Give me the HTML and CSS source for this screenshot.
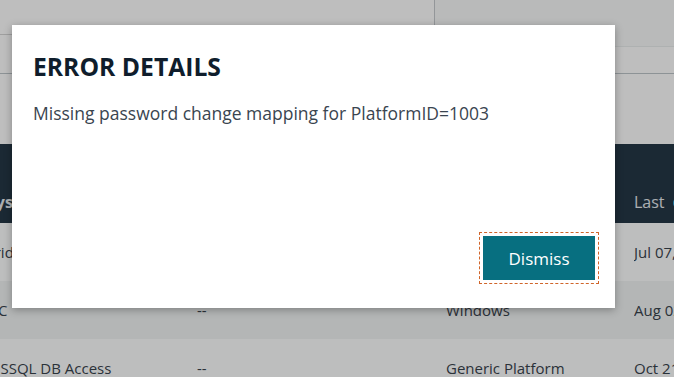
FILE: index.html
```html
<!DOCTYPE html>
<html>
<head>
<meta charset="utf-8">
<link rel="stylesheet" href="styles.css">
</head>
<body>
<div class="page">
  <div class="topbar">
    <div class="top-left"><div class="top-left-inner"></div></div>
    <div class="top-right"><div class="top-right-inner"></div></div>
  </div>
  <div class="gap"></div>
  <div class="table">
    <div class="row head">
      <div class="c c1">System Type</div>
      <div class="c c2">Address</div>
      <div class="c c3">Platform</div>
      <div class="c c4">Last <span class="info"></span></div>
    </div>
    <div class="row">
      <div class="c c1">Fridge Server</div>
      <div class="c c2">--</div>
      <div class="c c3">Unix</div>
      <div class="c c4">Jul 07, 2023</div>
    </div>
    <div class="row alt">
      <div class="c c1">DC</div>
      <div class="c c2">--</div>
      <div class="c c3">Windows</div>
      <div class="c c4">Aug 02, 2023</div>
    </div>
    <div class="row">
      <div class="c c1">MSSQL DB Access</div>
      <div class="c c2">--</div>
      <div class="c c3">Generic Platform</div>
      <div class="c c4">Oct 21, 2023</div>
    </div>
  </div>
</div>
<div class="overlay"></div>
<div class="modal">
  <h2 class="modal-title">ERROR DETAILS</h2>
  <p class="modal-text">Missing password change mapping for PlatformID=1003</p>
  <div class="modal-actions">
    <button class="btn">Dismiss</button>
  </div>
</div>
</body>
</html>
```
FILE: styles.css
```css
* { box-sizing: border-box; }
html, body { margin: 0; padding: 0; }
body {
  width: 674px;
  height: 377px;
  overflow: hidden;
  font-family: "Open Sans", "Liberation Sans", sans-serif;
  background: #fefefe;
  position: relative;
}
.page { width: 674px; }
.topbar {
  display: flex;
  height: 74px;
  border-bottom: 1px solid #bdc4c9;
}
.top-left { width: 434px; }
.top-left-inner { height: 35px; border-bottom: 1px solid #d5d5d5; }
.top-right { flex: 1; border-left: 1px solid #c5c9cc; }
.top-right-inner { height: 47px; background: #f7f9f9; border-bottom: 1px solid #e9ecec; }
.gap { height: 70px; }
.table { margin-left: -13px; width: 720px; }
.row {
  display: flex;
  height: 58px;
  align-items: center;
  font-size: 15px;
  color: #39434d;
  background: #fdfefe;
}
.row.alt { background: #f1f3f3; }
.row.head {
  height: 79px;
  background: #253746;
  color: #e6eaee;
  align-items: flex-end;
  padding-bottom: 10px;
  font-size: 16px;
}
.row.head .c1 { font-weight: 700; }
.c { white-space: nowrap; overflow: hidden; }
.c1 { width: 210px; }
.c2 { width: 249px; }
.c3 { width: 188px; }
.c4 { flex: 1; }
.info {
  display: inline-block;
  width: 12px; height: 12px;
  border-radius: 50%;
  background: #2a9fd6;
  vertical-align: -1px;
  margin-left: 4px;
}
.overlay {
  position: absolute;
  inset: 0;
  background: rgba(0,0,0,0.25);
}
.modal {
  position: absolute;
  left: 12px;
  top: 25px;
  width: 603px;
  height: 283px;
  background: #fff;
  box-shadow: 0 2px 8px rgba(0,0,0,0.3);
  padding: 26px 20px 28px 21px;
  display: flex;
  flex-direction: column;
}
.modal-title {
  margin: 0;
  font-size: 24.7px;
  font-weight: 700;
  color: #0f1d2c;
  line-height: 32px;
}
.modal-text {
  margin: 18px 0 0;
  font-size: 17.5px;
  color: #3a4550;
  line-height: 24px;
}
.modal-actions {
  margin-top: auto;
  display: flex;
  justify-content: flex-end;
}
.btn {
  width: 112px;
  height: 44px;
  background: #076f80;
  color: #fff;
  border: none;
  font-family: "Open Sans", "Liberation Sans", sans-serif;
  font-size: 17px;
  outline: 1px dashed #d0652a;
  outline-offset: 3px;
  padding: 0;
}
```
